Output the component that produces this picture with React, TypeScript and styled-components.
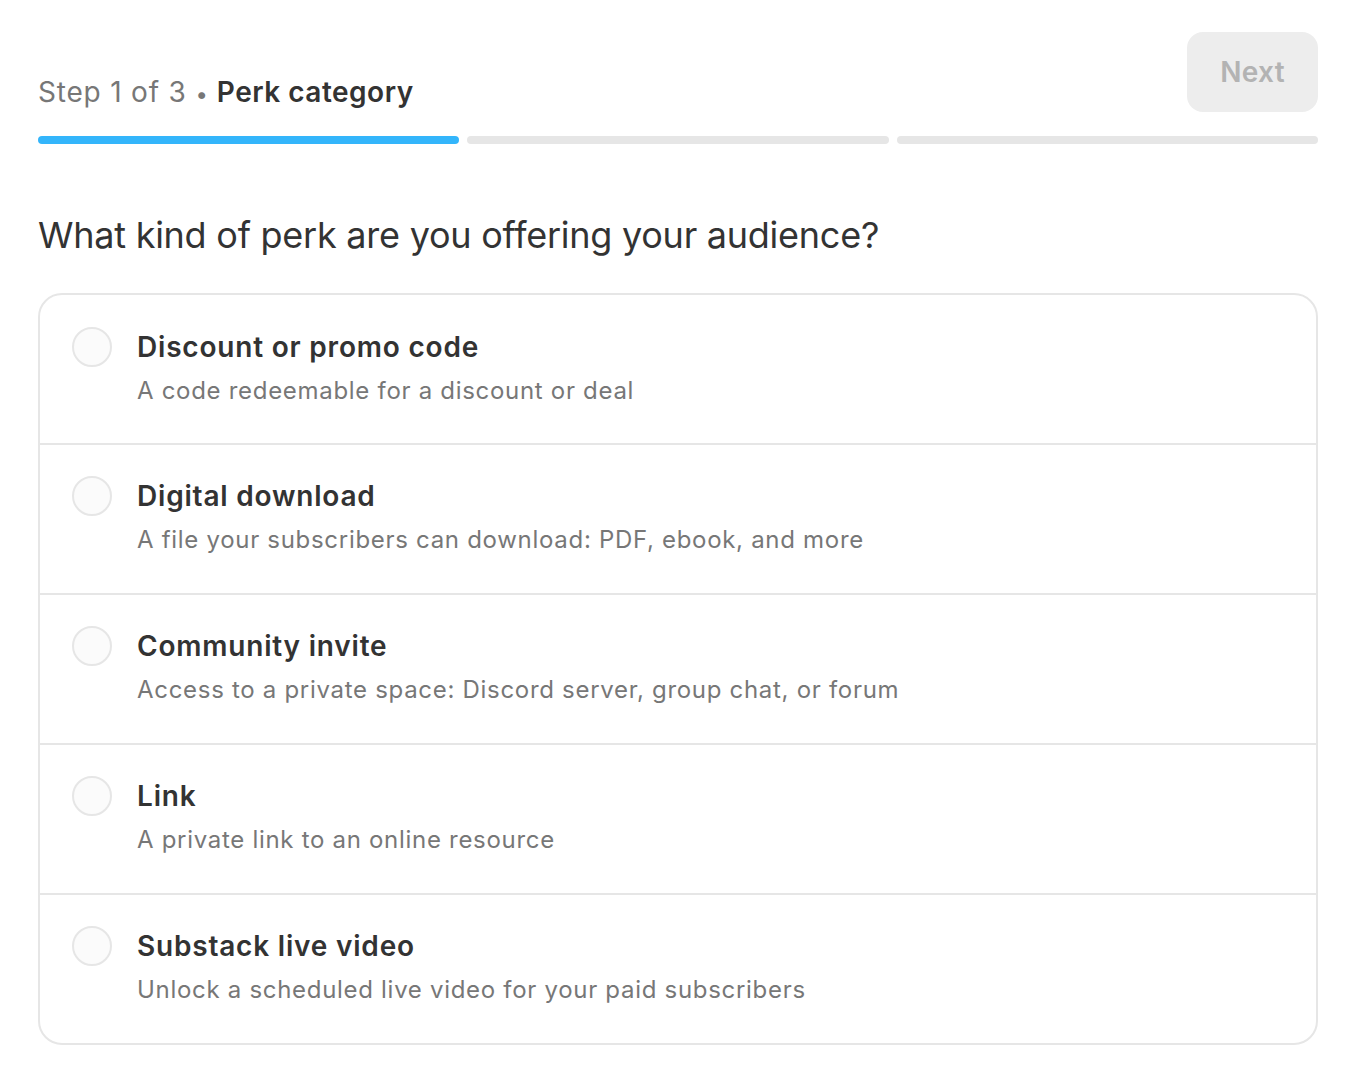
import * as React from 'react';
import styled, { createGlobalStyle } from 'styled-components';

const GlobalStyle = createGlobalStyle`
  body {
    margin: 0;
    background: #ffffff;
    font-family: Inter, "Noto Sans", "Liberation Sans", sans-serif;
    -webkit-font-smoothing: antialiased;
  }
`;

const Page = styled.div`
  padding: 32px 50px 40px 38px;
`;

const Header = styled.div`
  display: flex;
  justify-content: space-between;
  align-items: flex-end;
`;

const StepLabel = styled.div`
  font-size: 28px;
  line-height: 34px;
  padding-bottom: 1px;
  color: #777777;
  letter-spacing: 0.8px;
`;

const Dot = styled.span`
  margin: 0 8px 0 9px;
  font-size: 22px;
`;

const StepName = styled.span`
  color: #333333;
  font-weight: 600;
  letter-spacing: 0.5px;
`;

const NextButton = styled.button`
  width: 131px;
  height: 80px;
  border: none;
  border-radius: 16px;
  background: #ededed;
  color: #b3b3b3;
  font-family: inherit;
  font-size: 28px;
  font-weight: 600;
  letter-spacing: 0.3px;
  cursor: not-allowed;
`;

const Progress = styled.div`
  display: grid;
  grid-template-columns: repeat(3, 1fr);
  gap: 8px;
  margin-top: 24px;
`;

const Segment = styled.div<{ $active?: boolean }>`
  height: 8px;
  border-radius: 4px;
  background: ${(p) => (p.$active ? '#33b5fb' : '#e6e6e6')};
`;

const Question = styled.h2`
  margin: 69px 0 0;
  font-size: 36px;
  line-height: 44px;
  font-weight: 400;
  color: #333333;
  letter-spacing: -0.25px;
`;

const OptionList = styled.div`
  margin-top: 36px;
  border: 2px solid #e6e6e6;
  border-radius: 24px;
  overflow: hidden;
`;

const OptionRow = styled.label`
  display: flex;
  align-items: flex-start;
  gap: 25px;
  height: 150px;
  box-sizing: border-box;
  padding: 31px 32px 0;
  cursor: pointer;

  &:first-child {
    height: 148px;
    padding-top: 32px;
  }

  & + & {
    border-top: 2px solid #e6e6e6;
  }
`;

const Radio = styled.span`
  flex: none;
  width: 40px;
  height: 40px;
  box-sizing: border-box;
  border-radius: 50%;
  border: 2px solid #e6e6e6;
  background: #fbfbfb;
`;

const OptionText = styled.div`
  padding-top: 3px;
  display: flex;
  flex-direction: column;
  gap: 12px;
`;

const OptionTitle = styled.div`
  font-size: 28px;
  line-height: 34px;
  font-weight: 600;
  color: #333333;
  letter-spacing: 0.8px;
`;

const OptionDesc = styled.div`
  font-size: 24px;
  line-height: 30px;
  color: #777777;
  letter-spacing: 0.7px;
`;

const options = [
  { title: 'Discount or promo code', desc: 'A code redeemable for a discount or deal' },
  { title: 'Digital download', desc: 'A file your subscribers can download: PDF, ebook, and more' },
  { title: 'Community invite', desc: 'Access to a private space: Discord server, group chat, or forum' },
  { title: 'Link', desc: 'A private link to an online resource' },
  { title: 'Substack live video', desc: 'Unlock a scheduled live video for your paid subscribers' },
];

const App = () => {
  return (
    <>
      <GlobalStyle />
      <Page>
        <Header>
          <StepLabel>
            Step 1 of 3<Dot>•</Dot>
            <StepName>Perk category</StepName>
          </StepLabel>
          <NextButton disabled>Next</NextButton>
        </Header>
        <Progress>
          <Segment $active />
          <Segment />
          <Segment />
        </Progress>
        <Question>What kind of perk are you offering your audience?</Question>
        <OptionList>
          {options.map((o) => (
            <OptionRow key={o.title}>
              <Radio />
              <OptionText>
                <OptionTitle>{o.title}</OptionTitle>
                <OptionDesc>{o.desc}</OptionDesc>
              </OptionText>
            </OptionRow>
          ))}
        </OptionList>
      </Page>
    </>
  );
};

export default App;
